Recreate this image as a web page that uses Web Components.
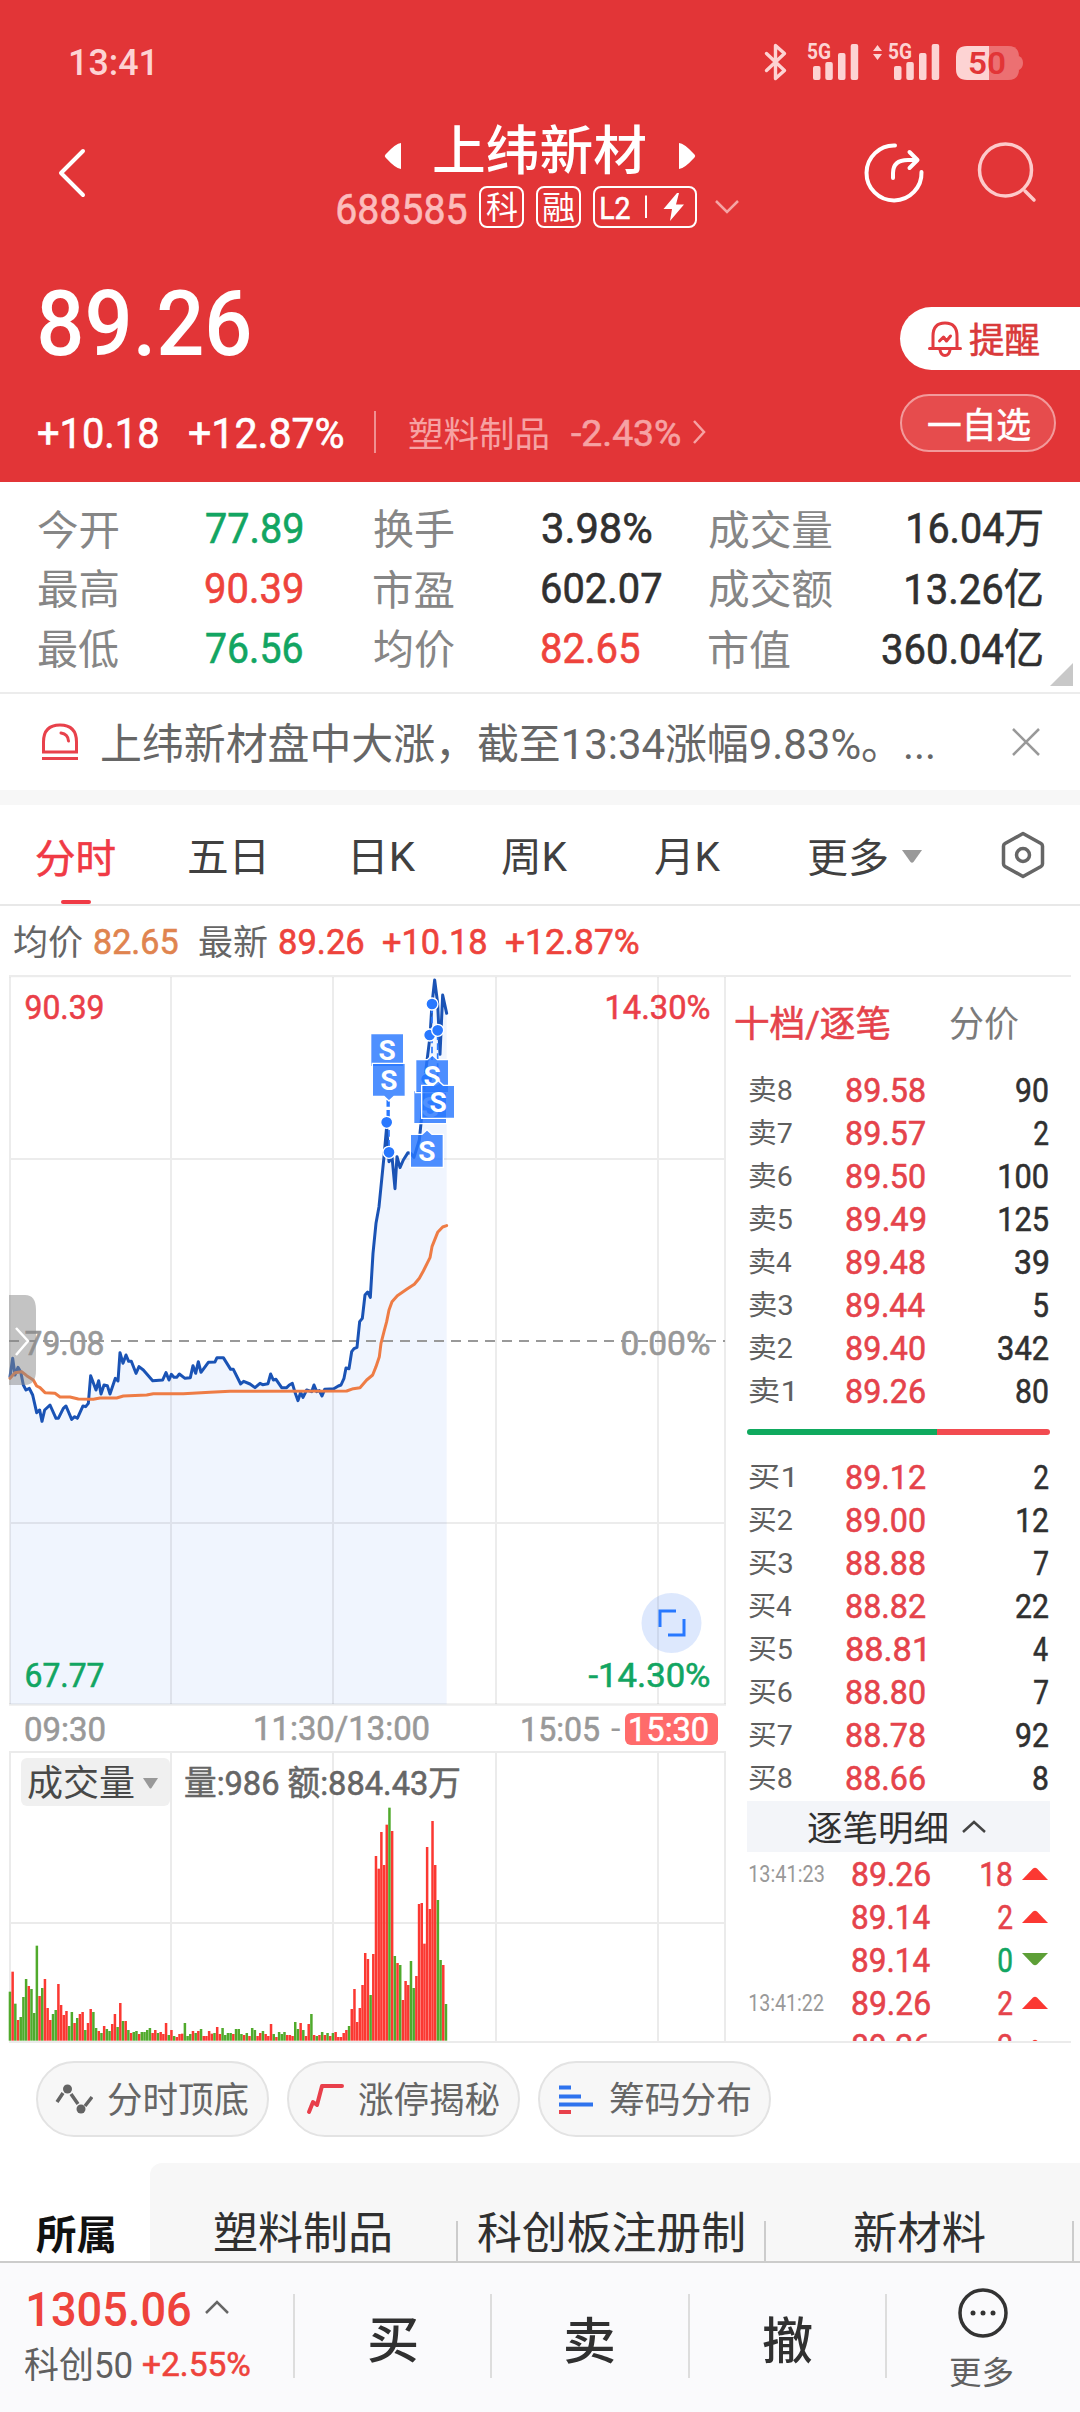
<!DOCTYPE html>
<html lang="zh-CN">
<head>
<meta charset="utf-8">
<title>上纬新材 688585</title>
<style>
body{margin:0;background:#fff;width:1080px;height:2412px;overflow:hidden;font-family:Roboto,"Noto Sans CJK SC",sans-serif}
</style>
</head>
<body>
<stock-page></stock-page>
<script>
const FAMILY = 'Roboto, "Noto Sans CJK SC", sans-serif';
const pen = document.createElement('canvas').getContext('2d');

// One line of text whose ink is w pixels wide and vertically centred in its box.
// s: font size, w: ink width, ml: left margin, c: colour, b: weight (450 is regular with a thin stroke);
// --dy nudges the baseline
class TextLine extends HTMLElement {
  connectedCallback() {
    const a = n => this.getAttribute(n);
    const s = +a('s'), w = +a('w'), text = a('t');
    const semi = a('b') === '450', b = semi ? 400 : a('b') || 400;
    pen.font = `${b} ${s}px ${FAMILY}`;
    const m = pen.measureText(text);
    const k = w / (m.actualBoundingBoxLeft + m.actualBoundingBoxRight);
    const dy = (m.actualBoundingBoxAscent - m.actualBoundingBoxDescent) / 2
             - (m.fontBoundingBoxAscent - m.fontBoundingBoxDescent) / 2;
    const root = this.attachShadow({mode: 'open'});
    root.innerHTML = `<style>
      :host{display:block;flex:none;width:${w}px;height:${s}px;line-height:${s}px;font:${b} ${s}px/${s}px ${FAMILY};
        margin-left:${a('ml') || 0}px;${a('c') ? 'color:' + a('c') : ''}}
      span{display:inline-block;white-space:pre;transform-origin:0 0;${semi ? '-webkit-text-stroke:.6px currentColor;' : ''}
        transform:translate(${m.actualBoundingBoxLeft * k}px,calc(${dy}px + var(--dy,1px))) scaleX(${k})}
    </style><span></span>`;
    root.querySelector('span').textContent = text;
  }
}
customElements.define('text-line', TextLine);
const T = (t, s, w, ml = 0, c = '', b = 400) =>
  `<text-line t="${t}" s="${s}" w="${w}" ml="${ml}" c="${c}" b="${b}"></text-line>`;

const define = (name, css, html) => customElements.define(name, class extends HTMLElement {
  constructor() {
    super();
    this.attachShadow({mode: 'open'}).innerHTML = `<style>:host{display:block;box-sizing:border-box}svg{display:block;flex:none}.r{display:flex;align-items:center}${css}</style>${html}`;
  }
});

const signal = x => [[0,66],[12.3,62],[25,53],[37.7,44]].map(([dx,y]) =>
  `<rect x="${x+dx}" y="${y}" width="7.500" height="${80-y}" rx="2"/>`).join('');

define('status-bar', ':host{--dy:0px;height:116px;padding:7px 56px 0 71px}.r{height:109px;justify-content:space-between}', `
<div class="r">${T('13:41',37,81,0,'#fdd3d3',500)}
<svg width="260" height="44" viewBox="764 40 260 44" fill="#fdd3d3">
<path d="M766.500 53.500 784.500 70.500 775.500 78.500V45.500L784.500 53.500 766.500 70.500" fill="none" stroke="#fdd3d3" stroke-width="3.400" stroke-linejoin="round" stroke-linecap="round"/>
<text x="807" y="59" font-size="22" font-weight="700" textLength="24" lengthAdjust="spacingAndGlyphs">5G</text>${signal(813)}
<path d="M873 51 877.500 45 882 51zM873 54 877.500 60 882 54z"/>
<text x="888" y="59" font-size="22" font-weight="700" textLength="24" lengthAdjust="spacingAndGlyphs">5G</text>${signal(894)}
<path d="M989 46H1008q11 0 11 11v12q0 11-11 11H989z" opacity=".38"/><path d="M1019 56q4 2 4 7t-4 7z" opacity=".38"/>
<path d="M989 46H967q-11 0-11 11v12q0 11 11 11H989z"/>
<text x="968" y="74" font-size="31" font-weight="600" fill="#e23537" textLength="38" lengthAdjust="spacingAndGlyphs">50</text>
</svg></div>`);

define('nav-bar', `:host{display:flex;align-items:center;height:116px;color:#fff}
.mid{margin-left:248px;width:404px}.t{--dy:0px;height:66px;padding-left:48px}.c{height:50px;--dy:2px}
.tag{display:flex;align-items:center;height:42px;box-sizing:border-box;border:2px solid #fff;border-radius:8px;--dy:0px}`, `
<svg width="32" height="52" viewBox="0 0 32 52" style="margin-left:56px;margin-top:-2px"><path d="M27 4 5 26 27 48" fill="none" stroke="#fff" stroke-width="4" stroke-linecap="round" stroke-linejoin="round"/></svg>
<div class="mid"><div class="r t">
<svg width="18" height="28" viewBox="0 0 18 28" style="margin-top:13px"><path d="M17 1V27Q12 27 1.500 15.500 0 14 1.500 12.500 12 1 17 1z" fill="#fff"/></svg>
${T('上纬新材',53,211,32,'',500)}
<svg width="18" height="28" viewBox="0 0 18 28" style="margin-left:33px;margin-top:13px"><path d="M1 1V27Q6 27 16.500 15.500 18 14 16.500 12.500 6 1 1 1z" fill="#fff"/></svg></div>
<div class="r c">${T('688585',42,129,1,'#fcbcbc',450)}
<div class="tag" style="margin-left:13px;width:45px">${T('科',32,31,5)}</div>
<div class="tag" style="margin-left:12px;width:45px">${T('融',32,31,5)}</div>
<div class="tag" style="margin-left:12px;width:104px">${T('L2',31,29,6,'',450)}<svg width="48" height="30" viewBox="0 0 48 30" style="margin-left:10px"><path d="M6 3.500V26" stroke="#fff" stroke-width="2"/><path d="M37 1 23.500 17H32L30 29 44 12.500H36L39 1z" fill="#fff"/></svg></div>
<svg width="26" height="16" viewBox="0 0 26 16" style="margin-left:17px"><path d="M2 2 13 13 24 2" fill="none" stroke="#f5a5a5" stroke-width="2.500"/></svg></div></div>
<svg width="68" height="68" viewBox="860 139 68 68" style="margin-left:120px;margin-top:-2px" fill="none" stroke="#fff" stroke-width="4" stroke-linecap="round" stroke-linejoin="round"><path d="M895 145.500A27.500 27.500 0 1 0 921.500 172"/><path d="M893 178V173Q893 160 908 160H917M909.500 152 917.500 160 909.500 168"/></svg>
<svg width="68" height="68" viewBox="972 139 68 68" style="margin-left:44px;margin-top:-2px" fill="none" stroke="#fdcaca" stroke-width="3.500" stroke-linecap="round"><circle cx="1005.500" cy="170" r="26"/><path d="M1025 191 1034 200"/></svg>`);

define('quote-head', `:host{display:flex;justify-content:space-between;height:250px;color:#fff}
.p{--dy:0px;height:100px;padding:40px 0 0 38px}.g{height:60px;margin-top:30px;padding-left:38px}
.b{width:180px;padding-top:75px}.a{height:63px;background:#fff;border-radius:32px 0 0 32px}
.z{margin-top:24px;height:58px;width:156px;box-sizing:border-box;border:2px solid #f29a9b;background:#e64c4d;border-radius:30px}`, `
<div><div class="r p">${T('89.26',91,210,2,'',500)}</div>
<div class="r g">${T('+10.18',42,120,0,'',450)}${T('+12.87%',42,154,31,'',450)}
<svg width="2" height="42" style="margin-left:31px"><path d="M1 0V42" stroke="#f09091" stroke-width="2"/></svg>
${T('塑料制品',35,139,33,'#f6a2a3')}${T('-2.43%',36,109,23,'#f6a2a3',450)}
<svg width="15" height="26" viewBox="0 0 15 26" style="margin-left:12px"><path d="M2 2 12 13 2 24" fill="none" stroke="#f6a2a3" stroke-width="2.500"/></svg></div></div>
<div class="b"><div class="r a"><svg width="34" height="36" viewBox="928 321 34 36" style="margin-left:28px" fill="none" stroke="#e23b40" stroke-width="3" stroke-linecap="round" stroke-linejoin="round"><path d="M929.500 348.500H960.500M933 348V336Q933 323 945 323T957 336V348M940 350Q941 355.500 945 355.500T950 350M939.500 341 943.500 337 946.500 341 950.500 336"/></svg>${T('提醒',35,69,8,'#d93a3a',450)}</div>
<div class="r z">${T('一自选',35,102,26,'',450)}</div></div>`);

const G='#12a562', R='#ee433c', D='#303030', L='#868686';
define('quote-stats', `:host{--dy:.5px;position:relative;height:212px;padding-top:16px;border-bottom:2px solid #ececec}
.g{display:grid;grid-template-columns:168px 168px 168px 167px 1fr auto;grid-auto-rows:60px;align-items:center;padding:0 38px}
.e{justify-self:end}i{position:absolute;right:7px;bottom:6px;width:23px;height:23px;background:#c8c8c8;clip-path:polygon(100% 0,100% 100%,0 100%)}`, `
<div class="g">${[
['今开','77.89',G,96,'换手','3.98%',D,109,'成交量',123,'16.04万',134],
['最高','90.39',R,96,'市盈','602.07',D,119,'成交额',123,'13.26亿',136],
['最低','76.56',G,96,'均价','82.65',R,97,'市值',81,'360.04亿',160]].map(r =>
T(r[0],41,80,0,L)+T(r[1],42,r[3],0,r[2],450)+T(r[4],41,80,0,L)+T(r[5],42,r[7],0,r[6],450)+T(r[8],41,r[9],0,L)+`<div class="e">${T(r[10],42,r[11],0,D,450)}</div>`).join('')}</div><i></i>`);

define('alert-strip', ':host{--dy:1.5px;height:111px;border-bottom:15px solid #f7f7f7}.r{height:96px}', `
<div class="r"><svg width="38" height="40" viewBox="41 722 38 40" style="margin-left:41px" fill="none" stroke="#e8414b" stroke-width="3"><path d="M43.500 752V742Q43.500 725 60 725T76.500 742V752zM42 758.500H78" /><path d="M61 733Q68 734 68.500 741" stroke-linecap="round"/></svg>
${T('上纬新材盘中大涨，截至13:34涨幅9.83%。...',42,831,23,'#666')}
<svg width="28" height="28" viewBox="0 0 28 28" style="margin-left:79px"><path d="M1 1 27 27M27 1 1 27" stroke="#999" stroke-width="2.500"/></svg></div>`);

define('period-tabs', ':host{height:101px;border-bottom:2px solid #e8e8e8;display:flex;align-items:center;color:#404040}.on{position:relative;padding-top:5px}.on:after{content:"";position:absolute;left:25px;top:68px;width:30px;height:4px;border-radius:2px;background:#f03a45}.k{padding-top:5px}', `
<div class="on" style="margin-left:36px">${T('分时',40,79,0,'#f03a45',450)}</div>
<div class="r k">${T('五日',40,75,74)}${T('日K',40,62,90)}${T('周K',40,66,86)}${T('月K',40,66,87)}${T('更多',40,79,87)}</div>
<svg width="20" height="13" viewBox="0 0 20 13" style="margin-left:15px;margin-top:3px"><path d="M0 0H20L11.500 12Q10 13.500 8.500 12z" fill="#999"/></svg>
<svg width="44" height="48" viewBox="1001 831 44 48" style="margin-left:79px" fill="none" stroke="#666" stroke-width="3.500"><path d="M1023 833.500 1041 843.500Q1042.500 844.500 1042.500 846V864Q1042.500 865.500 1041 866.500L1023 876.500 1005 866.500Q1003.500 865.500 1003.500 864V846Q1003.500 844.500 1005 843.500z" stroke-linejoin="round"/><circle cx="1023" cy="855" r="6.500"/></svg>`);

define('quote-line', ':host{height:69px}.r{height:69px}', `<div class="r">
${T('均价',35,68,14,'#666')}${T('82.65',35,84,12,'#e0844f',450)}${T('最新',35,68,21,'#666')}${T('89.26',35,84,12,R,450)}${T('+10.18',35,103,20,R,450)}${T('+12.87%',35,133,20,R,450)}</div>`);

const price='30,1250 38,1195 45,1245 54,1222 62,1235 70,1275 78,1290 88,1285 98,1305 110,1358 119,1350 126,1384 134,1350 150,1335 168,1375 175,1375 190,1345 198,1338 215,1378 224,1370 232,1375 249,1338 257,1340 265,1330 272,1247 288,1290 296,1262 303,1302 312,1275 322,1277 330,1302 346,1255 354,1263 360,1178 369,1210 378,1185 386,1204 394,1204 408,1240 417,1220 430,1230 458,1262 488,1260 498,1238 507,1260 514,1243 522,1252 530,1252 538,1242 555,1255 571,1253 579,1217 587,1240 595,1205 603,1237 625,1207 645,1206 651,1193 670,1193 692,1228 700,1228 722,1272 731,1264 750,1272 765,1283 780,1270 788,1274 804,1271 812,1242 820,1260 828,1258 845,1283 860,1283 868,1275 877,1270 886,1300 894,1322 902,1297 909,1312 920,1290 935,1295 942,1275 950,1295 958,1292 966,1308 974,1288 990,1287 1000,1287 1015,1278 1023,1275 1032,1255 1038,1224 1047,1226 1055,1175 1062,1166 1071,1162 1079,1085 1087,1075 1095,1005 1103,996 1111,1012 1119,880 1128,790 1137,740 1152,590 1160,500 1167,605 1176,590 1185,686 1191,590 1200,623 1210,600 1224,578 1232,580 1242,592 1258,540 1264,480 1275,350 1290,230 1296,132 1304,60 1313,130 1320,283 1328,105 1340,160';
const average='30,1255 45,1238 65,1235 80,1247 100,1260 110,1278 120,1283 135,1298 165,1300 180,1311 210,1311 235,1317 280,1318 300,1314 350,1314 370,1308 440,1305 460,1301 550,1301 630,1297 690,1294 1040,1293 1060,1286 1080,1283 1100,1260 1118,1245 1128,1220 1138,1190 1143,1150 1152,1115 1160,1085 1167,1050 1176,1025 1192,1007 1220,988 1243,973 1258,955 1270,933 1290,893 1296,860 1313,817 1328,801 1340,797';
const sell=(x,y,n)=>`<path d="M${x} ${y}${n=='t'?`h35l15-14 15 14h34`:'h99'}v99${n=='b'?'h-34l-15 14-15-14h-35':'h-99'}z" fill="#2878ff" fill-opacity=".82" stroke="#fff" stroke-width="4"/><text x="${x+49.5}" y="${y+79}" text-anchor="middle" font-size="84" font-weight="700" fill="#fff">S</text>`;
const dot=(x,y)=>`<circle cx="${x}" cy="${y}" r="18" fill="#2878ff" stroke="#fff" stroke-width="4"/>`;
const label=(t,x,w,y,c)=>`<text x="${x-1.5}" y="${y}" textLength="${w+3}" lengthAdjust="spacingAndGlyphs" font-size="34" fill="${c}" stroke="${c}" stroke-width=".6">${t}</text>`;

define('price-chart', ':host{height:731px}', `
<svg width="726" height="731" viewBox="0 975 726 731">
<polygon points="30,2233 ${price} 1340,2233" transform="translate(0 960) scale(.33333)" fill="#f0f5fe"/>
<g stroke="#000" stroke-opacity=".075" stroke-width="2"><path d="M10 977V1704M171 977V1704M333 977V1704M496 977V1704M658 977V1704M725 977V1704M9 1159H726M9 1523H726"/><path d="M9 976H726M9 1704.500H726" stroke-width="2.500"/></g>
<path d="M9 1341H725" stroke="#999" stroke-width="2" stroke-dasharray="10 7"/>
<g transform="translate(0 960) scale(.33333)" fill="none" stroke-linejoin="round" stroke-linecap="round"><polyline points="${price}" stroke="#1a53b5" stroke-width="9"/><polyline points="${average}" stroke="#ee7c45" stroke-width="9"/></g>
${label('90.39',26,77,1019,'#ea3f48')}${label('14.30%',606,103,1019,'#ea3f48')}${label('79.08',26,77,1355,'#989898')}${label('0.00%',622,87,1355,'#989898')}${label('67.77',26,77,1687,G)}${label('-14.30%',590,119,1687,G)}
<g transform="translate(0 960) scale(.33333)"><path d="M1162 420V490M1167 420V570M1296 140V300M1313 220V370" stroke="#2878ff" stroke-width="5" stroke-dasharray="20 10"/>
${sell(1112,221)}${sell(1117,310,'b')}${dot(1160,487)}${dot(1167,577)}${dot(1280,358)}${dot(1289,225)}${dot(1296,132)}${dot(1313,211)}${sell(1241,392)}${sell(1247,299,'t')}${sell(1265,376,'t')}${sell(1231,523,'t')}</g>
<path d="M9 1295H25Q36 1295 36 1310V1370Q36 1385 25 1385H9z" fill="#888" fill-opacity=".5"/><path d="M16 1328 28 1341 16 1355" fill="none" stroke="#fff" stroke-width="2.500"/>
<circle cx="671.500" cy="1623" r="30" fill="#2c6df2" fill-opacity=".16"/><path d="M676 1611H660V1627M668 1635H684V1619" fill="none" stroke="#2878ff" stroke-width="3"/>
</svg>`);

define('time-axis', ':host{height:45px;--dy:0px}.r{height:46px}.p{display:flex;align-items:center;width:93px;height:32px;border-radius:6px;background:#ff6b6b;margin-left:5px}', `<div class="r">
${T('09:30',34,80,25,'#999',450)}${T('11:30/13:00',34,174,150,'#999',450)}${T('15:05',34,77,93,'#999',450)}${T('-',34,9,12,'#999')}<div class="p">${T('15:30',34,78,5,'#fff',450)}</div></div>`);

const volume='g605r545g641r690g681g621g567r588g597g669g467r618g594r567r654r690g672g660r582r645r675r663g708g666r699g684r672r666g720r699r657g666g714r723g729r708g717g723r702r672g711r639g693r693g720r729g726g723r732g726g726g720g714r729r720g729r726r732r699g735r720g738r741r732r731g699g738g732r723g729r723g717r738r738r723r731g729r711r732g714g735g729g729r732g717g717g732r735g729r738g714g720r738r729g723r732r738r702g732r741g726g732g726r735r735r738g696g717r699g720r738r702g672r735g738r735g726r735g729r738g729r726r741r741r729r720g708r657r597r696r654r585r489r507g615r492r198r236r126r225r104g053r123g498r519g525r630r573r585g513g594r558r342r339r461r171r357r093r225g330g510r525g642';
const bars=volume.match(/[gr]\d+/g).map((v,i)=>{const y=+v.slice(1);return `<rect x="${(10+2.6915*i-1.3).toFixed(2)}" y="${(1790+y/3).toFixed(2)}" width="2.5" height="${((752-y)/3).toFixed(2)}" fill="${v[0]=='g'?'#50aa2c':'#fb3832'}"/>`}).join('');
define('volume-chart', ':host{--dy:0px;position:relative;height:292px}.h{position:absolute;left:21px;top:7px;height:48px}.s{width:149px;height:48px;background:#f0f0f0;border-radius:6px}', `
<svg width="726" height="292" viewBox="0 1751 726 292"><g stroke="#ebebeb" stroke-width="2"><path d="M10 1752V2041M171 1752V2041M333 1752V2041M496 1752V2041M658 1752V2041M725 1752V2041M9 1752H726M9 1923H726"/></g>${bars}</svg>
<div class="r h"><div class="r s">${T('成交量',36,106,7,'#484848')}<svg width="15" height="11" viewBox="0 0 15 11" style="margin-left:9px;margin-top:3px"><path d="M0 0H15L8.500 10Q7.500 11 6.500 10z" fill="#999"/></svg></div>${T('量:986 额:884.43万',34,274,15,'#666',450)}</div>`);

const book=rows=>rows.map(([n,p,q,w])=>`<div class="r q">${T(n,28,43,0,'#5f5f5f')}${T(p,34,79,54,'#e5434b',450)}<div class="e">${T(q,34,w,0,D,450)}</div></div>`).join('');
const up='<svg width="26" height="13" viewBox="0 0 26 13" style="margin-left:10px"><path d="M0 13 11 1.500Q13 0 15 1.500L26 13z" fill="#fb3832"/></svg>';
const down='<svg width="26" height="13" viewBox="0 0 26 13" style="margin-left:10px"><path d="M0 0 11 11.500Q13 13 15 11.500L26 0z" fill="#5d9f37"/></svg>';
define('order-book', `:host{--dy:0px;width:354px;height:1065px;overflow:hidden;padding-left:9px}
.h{height:91px}.q{height:43px;margin:0 32px 0 14px}.e{margin-left:auto;display:flex;align-items:center}
.bar{display:flex;margin:17px 30px 20px 12px;height:6px;border-radius:3px;overflow:hidden;background:linear-gradient(90deg,#0fa95e 190px,#f24b50 190px)}
.m{--dy:1px;margin:2px 30px 0 12px;height:51px;background:#f3f5f9}`, `
<div class="r h">${T('十档/逐笔',36,154,0,'#e5434b',450)}${T('分价',36,68,61,'#7b7b7b')}</div>
${book([['卖8','89.58','90',32],['卖7','89.57','2',14],['卖6','89.50','100',49],['卖5','89.49','125',49],['卖4','89.48','39',33],['卖3','89.44','5',14],['卖2','89.40','342',50],['卖1','89.26','80',32]])}
<div class="bar"></div>
${book([['买1','89.12','2',14],['买2','89.00','12',31],['买3','88.88','7',14],['买4','88.82','22',32],['买5','88.81','4',15],['买6','88.80','7',14],['买7','88.78','92',32],['买8','88.66','8',15]])}
<div class="r m">${T('逐笔明细',35,139,61,D)}<svg width="24" height="13" viewBox="0 0 24 13" style="margin-left:15px"><path d="M1 12 12 2 23 12" fill="none" stroke="#444" stroke-width="2.500"/></svg></div>
${[['13:41:23','89.26','18',31,up],['','89.14','2',14,up],['','89.14','0',14,down],['13:41:22','89.26','2',14,up],['','89.26','2',14,up]].map(r=>`<div class="r q">${r[0]?T(r[0],23,75,0,'#999'):''}${T(r[1],34,78,r[0]?28:103,'#e5434b',450)}<div class="e">${T(r[2],34,r[3],0,r[4]===down?G:'#e5434b',450)}${r[4]}</div></div>`).join('')}`);

define('chart-area', ':host{display:flex;height:1069px;position:relative}.l{width:726px}.rt{border-top:2.5px solid #ebebeb;width:345px;box-sizing:border-box;height:1068px;border-bottom:2px solid #ebebeb;overflow:hidden}.l:after{content:"";display:block;height:2px;margin:-2px 0 0 9px;background:#ebebeb}', `
<div class="l"><price-chart></price-chart><time-axis></time-axis><volume-chart></volume-chart></div><div class="rt"><order-book></order-book></div>`);

define('tool-chips', ':host{--dy:0px;display:flex;gap:18px;padding:17px 36px 0;height:119px}.c{display:flex;align-items:center;box-sizing:border-box;height:76px;width:233px;border:2px solid #e3e3e3;border-radius:38px;background:#f7f7f7}svg{margin-left:17px}', `
<div class="c"><svg width="38" height="34" viewBox="55 2081 38 34" stroke="#646464" stroke-width="3.500" fill="none"><path d="M57 2101 63 2092M71 2093 78 2103M85 2105 92 2096"/><circle cx="67.500" cy="2088" r="4.500" fill="#646464" stroke="none"/><circle cx="81" cy="2108" r="4.500" fill="#646464" stroke="none"/></svg>${T('分时顶底',36,140,15,'#666')}</div>
<div class="c"><svg width="38" height="34" viewBox="308 2081 38 34" fill="none" stroke="#e83f4b" stroke-width="4" stroke-linejoin="round" stroke-linecap="round"><path d="M311 2111 315 2101 319 2104 324 2085H344"/></svg>${T('涨停揭秘',36,140,15,'#666')}</div>
<div class="c"><svg width="38" height="34" viewBox="559 2081 38 34" stroke="#2e73ee" stroke-width="4"><path d="M561 2086.500H573M561 2095.500H583M561 2103.500H595"/><path d="M561 2111H573" stroke="#e8414b"/></svg>${T('筹码分布',36,140,15,'#666')}</div>`);

define('sector-row', ':host{display:flex;height:100px;border-bottom:2px solid #ccc}.a{width:150px;flex:none;padding-top:42px}.t{--dy:0px;flex:1;background:#f7f7f7;border-top-left-radius:12px;height:98px;padding-top:38px;box-sizing:border-box;display:flex}i{width:2px;height:40px;margin-top:20px;background:#ccc;flex:none}', `
<div class="a"><div class="r" style="height:57px">${T('所属',40,78,36,'#111',700)}</div></div>
<div class="t"><div class="r" style="height:61px">${T('塑料制品',44,175,65,D)}</div><i style="margin-left:66px"></i><div class="r" style="height:61px">${T('科创板注册制',44,265,20,D)}</div><i style="margin-left:21px"></i><div class="r" style="height:61px">${T('新材料',44,131,88,D)}</div><i style="margin-left:87px"></i></div>`);

define('trade-bar', ':host{display:flex;height:149px;background:#fafafc;padding-top:31px}.x{width:293px;flex:none}i{width:2px;height:84px;background:#ddd;flex:none}.b{width:195.400px;height:90px;display:flex;align-items:center;justify-content:center}.m{padding:0 0 0 63px;margin-top:-7px}', `
<div class="x"><div class="r" style="height:26px">${T('1305.06',49,161,29,R,500)}<svg width="24" height="14" viewBox="0 0 24 14" style="margin-left:15px"><path d="M1 13 12 2 23 13" fill="none" stroke="#666" stroke-width="2.500"/></svg></div>
<div class="r" style="height:86px">${T('科创50',36,107,25,'#606060')}${T('+2.55%',34,107,11,R,450)}</div></div>
<i></i><div class="b">${T('买',50,48,0,D,500)}</div><i></i><div class="b">${T('卖',50,48,0,D,500)}</div><i></i><div class="b">${T('撤',50,49,0,D,500)}</div><i></i>
<div class="m"><svg width="52" height="52" viewBox="-26 -26 52 52" style="margin-left:7px"><circle r="23" fill="none" stroke="#333" stroke-width="3.500"/><g fill="#333"><circle cx="-10" r="2.500"/><circle r="2.500"/><circle cx="10" r="2.500"/></g></svg><div class="r" style="height:64px">${T('更多',32,63,0,'#606060')}</div></div>`);

define('stock-page', ':host{width:1080px;height:2412px;overflow:hidden;background:#fff}.red{background:#e23537}', `
<div class="red"><status-bar></status-bar><nav-bar></nav-bar><quote-head></quote-head></div>
<quote-stats></quote-stats><alert-strip></alert-strip><period-tabs></period-tabs><quote-line></quote-line>
<chart-area></chart-area><tool-chips></tool-chips><sector-row></sector-row><trade-bar></trade-bar>`);
</script>
</body>
</html>
